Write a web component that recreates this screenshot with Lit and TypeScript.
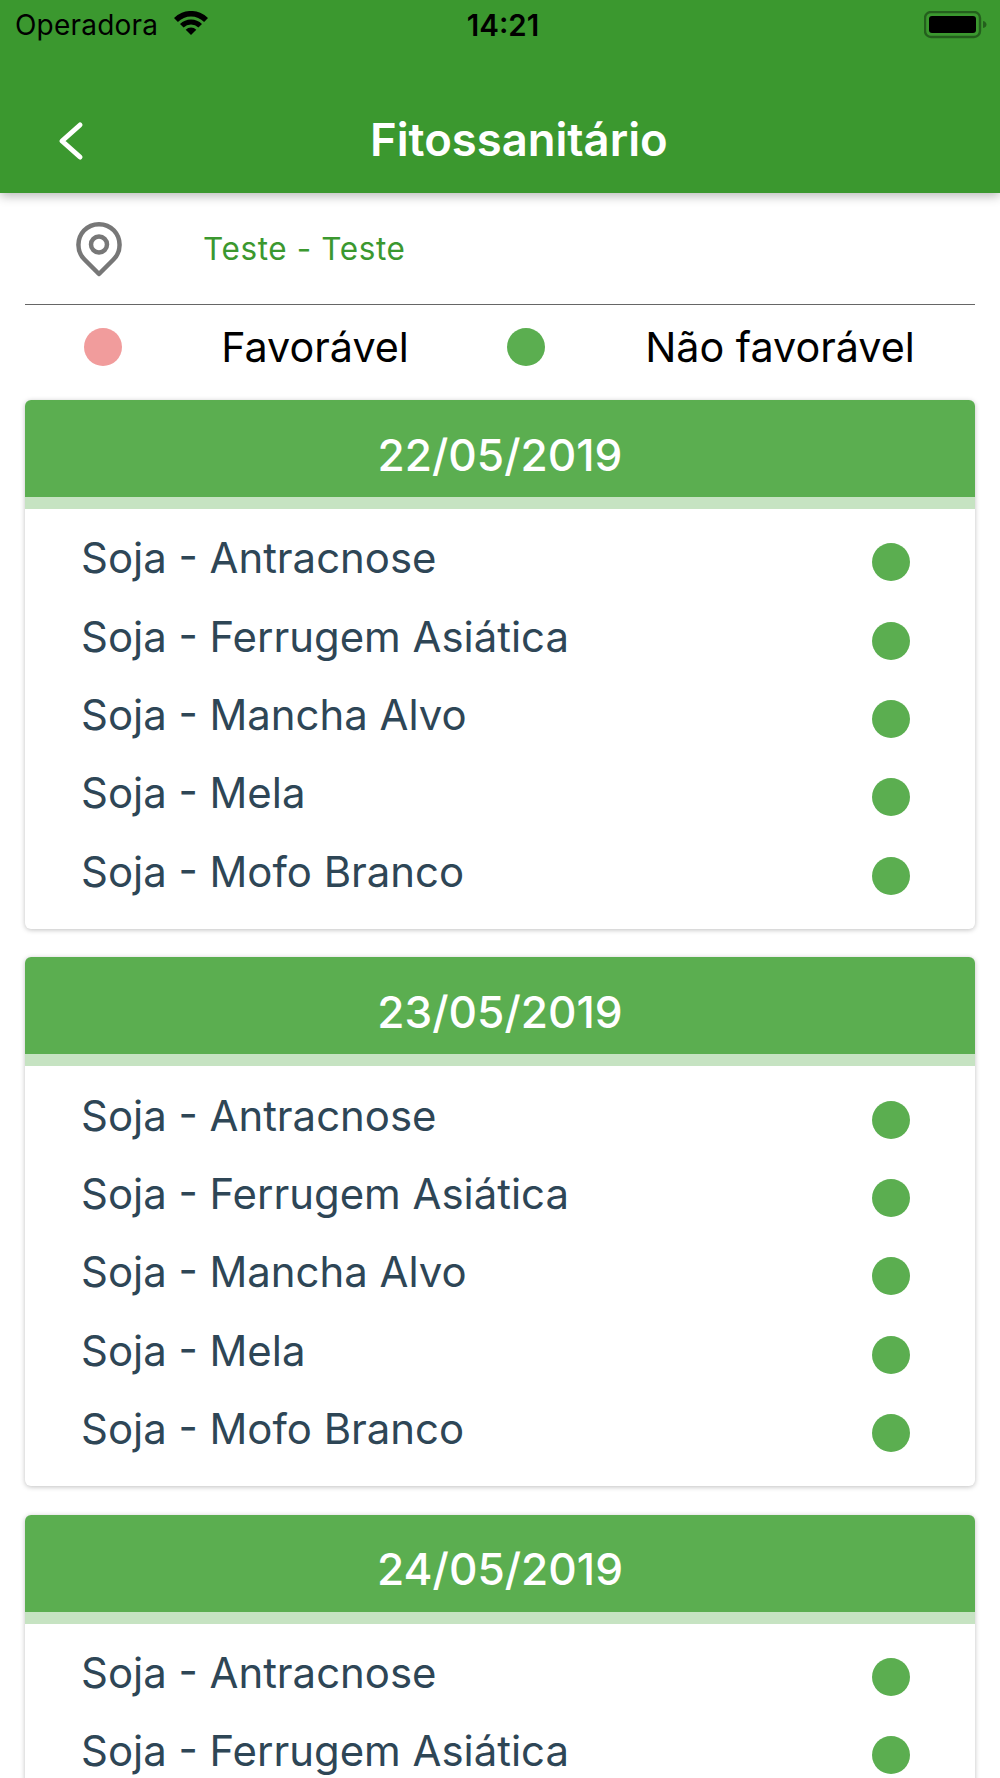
import { LitElement, html, css } from "lit";
import { customElement } from "lit/decorators.js";

const ROWS = ["Soja - Antracnose", "Soja - Ferrugem Asiática", "Soja - Mancha Alvo", "Soja - Mela", "Soja - Mofo Branco"];
const CARDS = [
  { date: "22/05/2019", rows: ROWS },
  { date: "23/05/2019", rows: ROWS },
  { date: "24/05/2019", rows: ROWS.slice(0, 2) },
];

@customElement("app-root")
export class AppRoot extends LitElement {
  static styles = css`
    :host {
      display: block;
      width: 1000px;
      height: 1778px;
      overflow: hidden;
      background: #fff;
      font-family: Inter, "Liberation Sans", sans-serif;
    }
    .header {
      height: 193px;
      background: #3b982f;
      box-shadow: 0 3px 10px rgba(0, 0, 0, 0.28);
      position: relative;
      display: flex;
      flex-direction: column;
    }
    .status {
      height: 50px;
      display: grid;
      grid-template-columns: 1fr auto 1fr;
      align-items: center;
      padding: 0 12px 0 15px;
      color: #000;
      font-size: 28px;
    }
    .status-left { display: flex; align-items: center; gap: 16px; }
    .carrier { letter-spacing: 0.2px; }
    .wifi { margin-top: -4px; }
    .time { font-weight: 600; font-size: 29.5px; padding-left: 3px; }
    .battery { justify-self: end; display: block; }
    .nav {
      flex: 1;
      display: flex;
      align-items: center;
      padding: 36px 0 0 56px;
    }
    .back { display: block; margin-top: 2px; }
    .title {
      margin-left: 284px;
      color: #fff;
      font-size: 45.4px;
      font-weight: 600;
    }
    .place {
      height: 112px;
      margin: 0 25px;
      border-bottom: 1px solid #666;
      display: flex;
      align-items: center;
      box-sizing: border-box;
      padding-left: 50px;
    }
    .place-text {
      margin-left: 80px;
      color: #3b982f;
      font-size: 31.5px;
      letter-spacing: 0.6px;
    }
    .legend {
      display: grid;
      grid-template-columns: 156px 268px 154px 354px;
      align-items: center;
      justify-items: center;
      margin: 0 25px;
      height: 83px;
      color: #000;
      font-size: 41.3px;
    }
    .dot {
      width: 38px;
      height: 38px;
      border-radius: 50%;
      background: #5bae50;
    }
    .dot.red { background: #f19c9c; }
    .card {
      margin: 12px 25px 28.4px;
      border-radius: 6px;
      background: #fff;
      box-shadow: 0 1px 5px rgba(0, 0, 0, 0.25);
      overflow: hidden;
    }
    .card-date {
      box-sizing: border-box;
      height: 109px;
      padding-top: 12px;
      display: flex;
      align-items: center;
      justify-content: center;
      background: #5bae50;
      color: #fff;
      font-size: 44.2px;
      font-weight: 500;
      border-bottom: 12px solid #c6e3c2;
    }
    .rows { padding: 14px 0 14px; }
    .row {
      height: 78.4px;
      display: flex;
      align-items: center;
      justify-content: space-between;
      padding: 0 65px 0 56px;
      color: #2e4656;
      font-size: 41.9px;
    }
    .row-label { padding-bottom: 9px; }
  `;

  render() {
    return html`
      <div class="header">
        <div class="status">
          <div class="status-left">
            <span class="carrier">Operadora</span>
            <svg class="wifi" width="34" height="24" viewBox="0 0 34 24">
              <path d="M0 7 A24 24 0 0 1 34 7 L30.1 10.9 A18.5 18.5 0 0 0 3.9 10.9 Z" fill="#000"/>
              <path d="M6 13 A15.5 15.5 0 0 1 28 13 L24.4 16.6 A10.5 10.5 0 0 0 9.6 16.6 Z" fill="#000"/>
              <path d="M11.7 18.7 A7.5 7.5 0 0 1 22.3 18.7 L17 24 Z" fill="#000"/>
            </svg>
          </div>
          <span class="time">14:21</span>
          <svg class="battery" width="64" height="28" viewBox="0 0 64 28">
            <rect x="1" y="1" width="55" height="25" rx="6" fill="none" stroke="#245f1d" stroke-width="2.4"/>
            <rect x="5" y="5" width="47" height="17" rx="3" fill="#000"/>
            <path d="M59 10 C61.5 10.5 62.5 12 62.5 13.5 C62.5 15 61.5 16.5 59 17 Z" fill="#245f1d"/>
          </svg>
        </div>
        <div class="nav">
          <svg class="back" width="30" height="44" viewBox="0 0 30 44">
            <path d="M24 6 L6 22 L24 38" fill="none" stroke="#fff" stroke-width="5" stroke-linecap="round" stroke-linejoin="round"/>
          </svg>
          <span class="title">Fitossanitário</span>
        </div>
      </div>
      <div class="place">
        <svg width="48" height="56" viewBox="0 0 48 56">
          <path d="M24 53 L9.5 38.5 C1 30 2 17 9 9.5 C17 1 31 1 39 9.5 C46 17 47 30 38.5 38.5 Z" fill="none" stroke="#777" stroke-width="4.5" stroke-linejoin="round"/>
          <circle cx="24" cy="23.5" r="8" fill="none" stroke="#777" stroke-width="4.5"/>
        </svg>
        <span class="place-text">Teste - Teste</span>
      </div>
      <div class="legend">
        <span class="dot red"></span>
        <span>Favorável</span>
        <span class="dot"></span>
        <span>Não favorável</span>
      </div>
      ${CARDS.map(
        (c) => html`
          <div class="card">
            <div class="card-date">${c.date}</div>
            <div class="rows">
              ${c.rows.map((r) => html`<div class="row"><span class="row-label">${r}</span><span class="dot"></span></div>`)}
            </div>
          </div>
        `
      )}
    `;
  }
}
